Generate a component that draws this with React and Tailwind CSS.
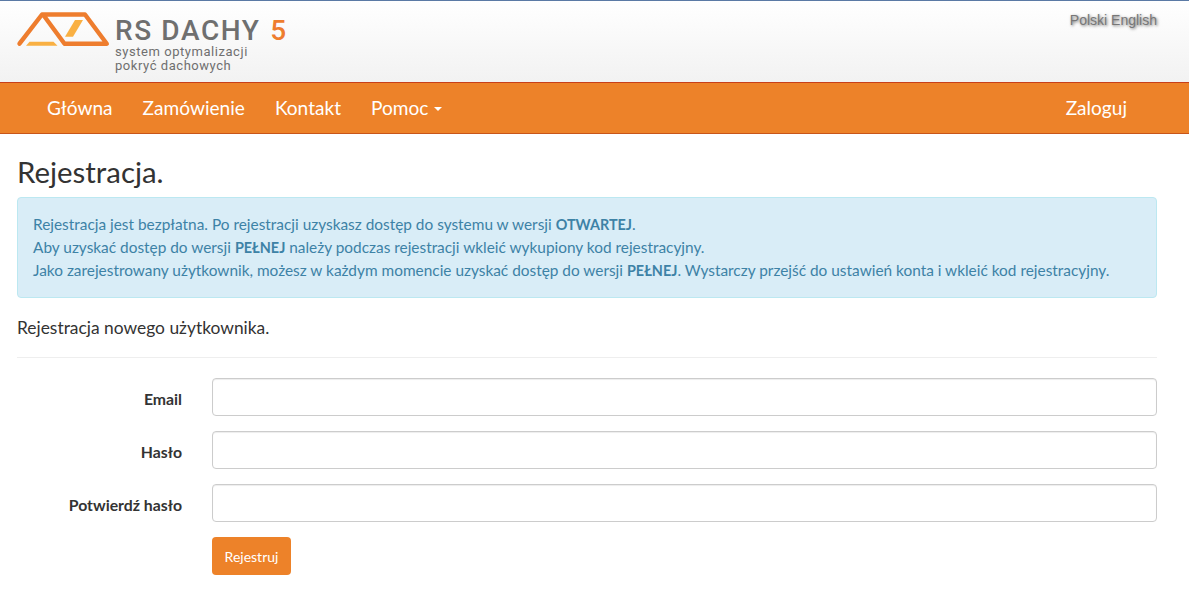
import React from 'react';

const font = "font-['Lato','Noto_Sans',sans-serif]";

const Logo = () => (
    <div className="flex items-start">
        <svg width="96" height="38" viewBox="15 10 96 38" className="mt-[9px] ml-[15px] shrink-0">
            <path d="M19.5 43.7 L42 14.5 H85 L106.8 43.7 H64.5 L43 14.5" fill="none" stroke="#ee7d2e" strokeWidth="4.4" strokeLinejoin="round" strokeLinecap="round" />
            <path d="M29.5 41.7 H53.5 L57.5 45.7 H26 Z" fill="#f9b043" />
            <path d="M75 20 H83 L73 36.7 H65 Z" fill="#f9b043" />
        </svg>
        <div className="ml-[4px] mt-[15px] font-['Roboto',sans-serif] text-[#6f6f6f]">
            <div className="text-[28px] leading-[29px] tracking-[1.6px] font-medium whitespace-nowrap">
                RS DACHY <span className="text-[#ee7d2e] ml-[1px]">5</span>
            </div>
            <div className="text-[13px] leading-[14px] tracking-[0.55px]">system optymalizacji</div>
            <div className="text-[13px] leading-[14px] tracking-[0.55px]">pokryć dachowych</div>
        </div>
    </div>
);

const NavLink = ({ children }) => (
    <a href="#" className="block px-[15px] text-white text-[19.1px] leading-[49px]">{children}</a>
);

const Field = ({ label, type }) => (
    <div className="flex items-center mb-[15px]">
        <label className="w-[165px] mr-[30px] pt-[3px] text-right text-[15.8px] font-bold text-[#333]">{label}</label>
        <input type={type} className="flex-1 h-[38px] rounded-[4px] border border-[#ccc] bg-white px-3 shadow-[inset_0_1px_1px_rgba(0,0,0,0.075)]" />
    </div>
);

export default function App() {
    return (
        <div className={`${font} min-h-[598px] bg-white text-[#333]`}>
            {/* Top header */}
            <div className="h-[83px] border-t border-t-[#5b7aa5] border-b border-b-[#c8401a] bg-gradient-to-b from-white to-[#f2f2f2] flex justify-between">
                <Logo />
                <div className="pr-[32px] pt-[9px] font-['Liberation_Sans',sans-serif] text-[14px] text-[#777] [text-shadow:1px_1px_3px_rgba(0,0,0,0.6)]">
                    Polski English
                </div>
            </div>

            {/* Menu */}
            <nav className="h-[51px] bg-[#ed8229] border-b border-b-[#c8561a] flex justify-between pl-[32px] pr-[47px]">
                <div className="flex">
                    <NavLink>Główna</NavLink>
                    <NavLink>Zamówienie</NavLink>
                    <NavLink>Kontakt</NavLink>
                    <a href="#" className="flex items-center px-[15px] h-[49px] text-white text-[19.1px] leading-[49px]">
                        Pomoc
                        <span className="ml-[6px] mt-[2px] border-x-[4px] border-x-transparent border-t-[4px] border-t-white" />
                    </a>
                </div>
                <NavLink>Zaloguj</NavLink>
            </nav>

            <div className="px-[17px] mr-[15px]">
                <h2 className="text-[29.4px] leading-[33px] mt-[21px] mb-[9px] text-[#333]">Rejestracja.</h2>

                <div className="rounded-[4px] border border-[#bce8f1] bg-[#d9edf7] text-[#3d82a6] p-[15px] text-[15.4px] leading-[23px] mb-[20px] whitespace-nowrap">
                    Rejestracja jest bezpłatna. Po rejestracji uzyskasz dostęp do systemu w wersji <b className="text-[14.4px]">OTWARTEJ</b>.<br />
                    Aby uzyskać dostęp do wersji <b className="text-[14.4px]">PEŁNEJ</b> należy podczas rejestracji wkleić wykupiony kod rejestracyjny.<br />
                    Jako zarejestrowany użytkownik, możesz w każdym momencie uzyskać dostęp do wersji <b className="text-[14.4px]">PEŁNEJ</b>. Wystarczy przejść do ustawień konta i wkleić kod rejestracyjny.
                </div>

                <h4 className="text-[17.4px] leading-[20px] text-[#333]">Rejestracja nowego użytkownika.</h4>
                <hr className="mt-[19px] mb-[20px] border-0 border-t border-t-[#eee]" />

                <Field label="Email" type="email" />
                <Field label="Hasło" type="password" />
                <Field label="Potwierdź hasło" type="password" />

                <div className="pl-[195px]">
                    <button className="h-[38px] w-[79px] rounded-[4px] bg-[#ed8229] text-white text-[14px]">Rejestruj</button>
                </div>
            </div>
        </div>
    );
}
